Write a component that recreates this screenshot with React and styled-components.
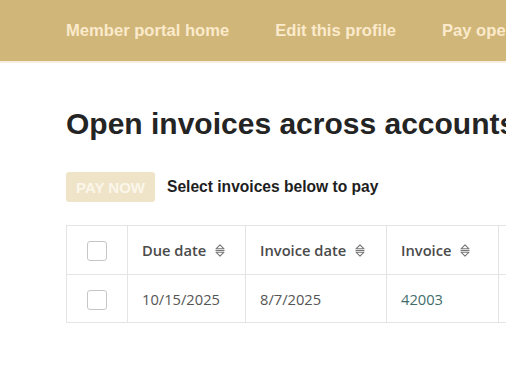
import React from "react";
import styled, { createGlobalStyle } from "styled-components";

const Global = createGlobalStyle`
  html, body { margin: 0; padding: 0; overflow: hidden; background: #fff; }
  body { font-family: "Liberation Sans", Arial, sans-serif; }
`;

const Nav = styled.nav`
  height: 61px;
  background: #d0b679;
  border-bottom: 2px solid #f6efdf;
  display: flex;
  align-items: center;
  gap: 46px;
  padding-left: 66px;
  white-space: nowrap;
`;

const NavLink = styled.a`
  font-family: "Liberation Sans", Arial, sans-serif;
  font-weight: 700;
  font-size: 16.6px;
  color: #fbeacb;
  text-decoration: none;
`;

const Main = styled.main`
  padding-left: 66px;
`;

const Title = styled.h1`
  margin: 43px 0 0;
  font-family: "Liberation Sans", Arial, sans-serif;
  font-weight: 700;
  font-size: 30px;
  line-height: 1.2;
  color: #242424;
  white-space: nowrap;
`;

const Actions = styled.div`
  display: flex;
  align-items: center;
  gap: 12px;
  margin-top: 30px;
`;

const PayButton = styled.button`
  width: 89px;
  height: 30px;
  border: none;
  border-radius: 3px;
  background: #efe4c8;
  color: #fbf6ea;
  font-family: "Liberation Sans", Arial, sans-serif;
  font-weight: 700;
  font-size: 15px;
  padding: 0;
  cursor: default;
`;

const Hint = styled.span`
  font-family: "Liberation Sans", Arial, sans-serif;
  font-weight: 700;
  font-size: 15.6px;
  color: #1e1e1e;
`;

const Table = styled.table`
  margin-top: 23px;
  border-collapse: collapse;
  table-layout: fixed;
  width: 700px;
  font-family: "Open Sans", "Noto Sans", sans-serif;
  font-size: 14.7px;
`;

const Th = styled.th`
  box-sizing: border-box;
  width: ${(p) => p.$w}px;
  height: 49px;
  border: 1px solid #e4e4e4;
  padding: 0 14px;
  text-align: ${(p) => (p.$center ? "center" : "left")};
  font-weight: 600;
  color: #4a4a4a;
  white-space: nowrap;
  overflow: hidden;
`;

const Td = styled.td`
  box-sizing: border-box;
  height: 48px;
  border: 1px solid #e4e4e4;
  padding: 0 14px;
  text-align: ${(p) => (p.$center ? "center" : "left")};
  color: #555;
  white-space: nowrap;
  overflow: hidden;
`;

const HeadInner = styled.span`
  display: inline-flex;
  align-items: center;
  gap: 8px;
  margin-top: -2px;
`;

const Checkbox = styled.span`
  display: inline-block;
  width: 18px;
  height: 18px;
  border: 1.5px solid #c6c6c6;
  border-radius: 3px;
  vertical-align: middle;
  background: #fff;
`;

const InvoiceLink = styled.a`
  color: #3f6d6b;
  text-decoration: none;
`;

const SortIcon = () => (
  <svg width="12" height="15" viewBox="0 0 12 15" fill="none" stroke="#777" strokeWidth="1.1" strokeLinejoin="round">
    <path d="M2 5.8 L6 1.8 L10 5.8 Z" />
    <path d="M1.5 7.5 H10.5" />
    <path d="M2 9.2 L10 9.2 L6 13.2 Z" />
  </svg>
);

const SortHead = ({ children, w }) => (
  <Th $w={w}>
    <HeadInner>
      {children}
      <SortIcon />
    </HeadInner>
  </Th>
);

export default function App() {
  return (
    <>
      <Global />
      <Nav>
        <NavLink href="#">Member portal home</NavLink>
        <NavLink href="#">Edit this profile</NavLink>
        <NavLink href="#">Pay open invoices</NavLink>
      </Nav>
      <Main>
        <Title>Open invoices across accounts</Title>
        <Actions>
          <PayButton disabled>PAY NOW</PayButton>
          <Hint>Select invoices below to pay</Hint>
        </Actions>
        <Table>
          <thead>
            <tr>
              <Th $w={61} $center>
                <Checkbox />
              </Th>
              <SortHead w={118}>Due date</SortHead>
              <SortHead w={141}>Invoice date</SortHead>
              <SortHead w={112}>Invoice</SortHead>
              <SortHead w={268}>Amount</SortHead>
            </tr>
          </thead>
          <tbody>
            <tr>
              <Td $center>
                <Checkbox />
              </Td>
              <Td>10/15/2025</Td>
              <Td>8/7/2025</Td>
              <Td>
                <InvoiceLink href="#">42003</InvoiceLink>
              </Td>
              <Td>$0.00</Td>
            </tr>
          </tbody>
        </Table>
      </Main>
    </>
  );
}
